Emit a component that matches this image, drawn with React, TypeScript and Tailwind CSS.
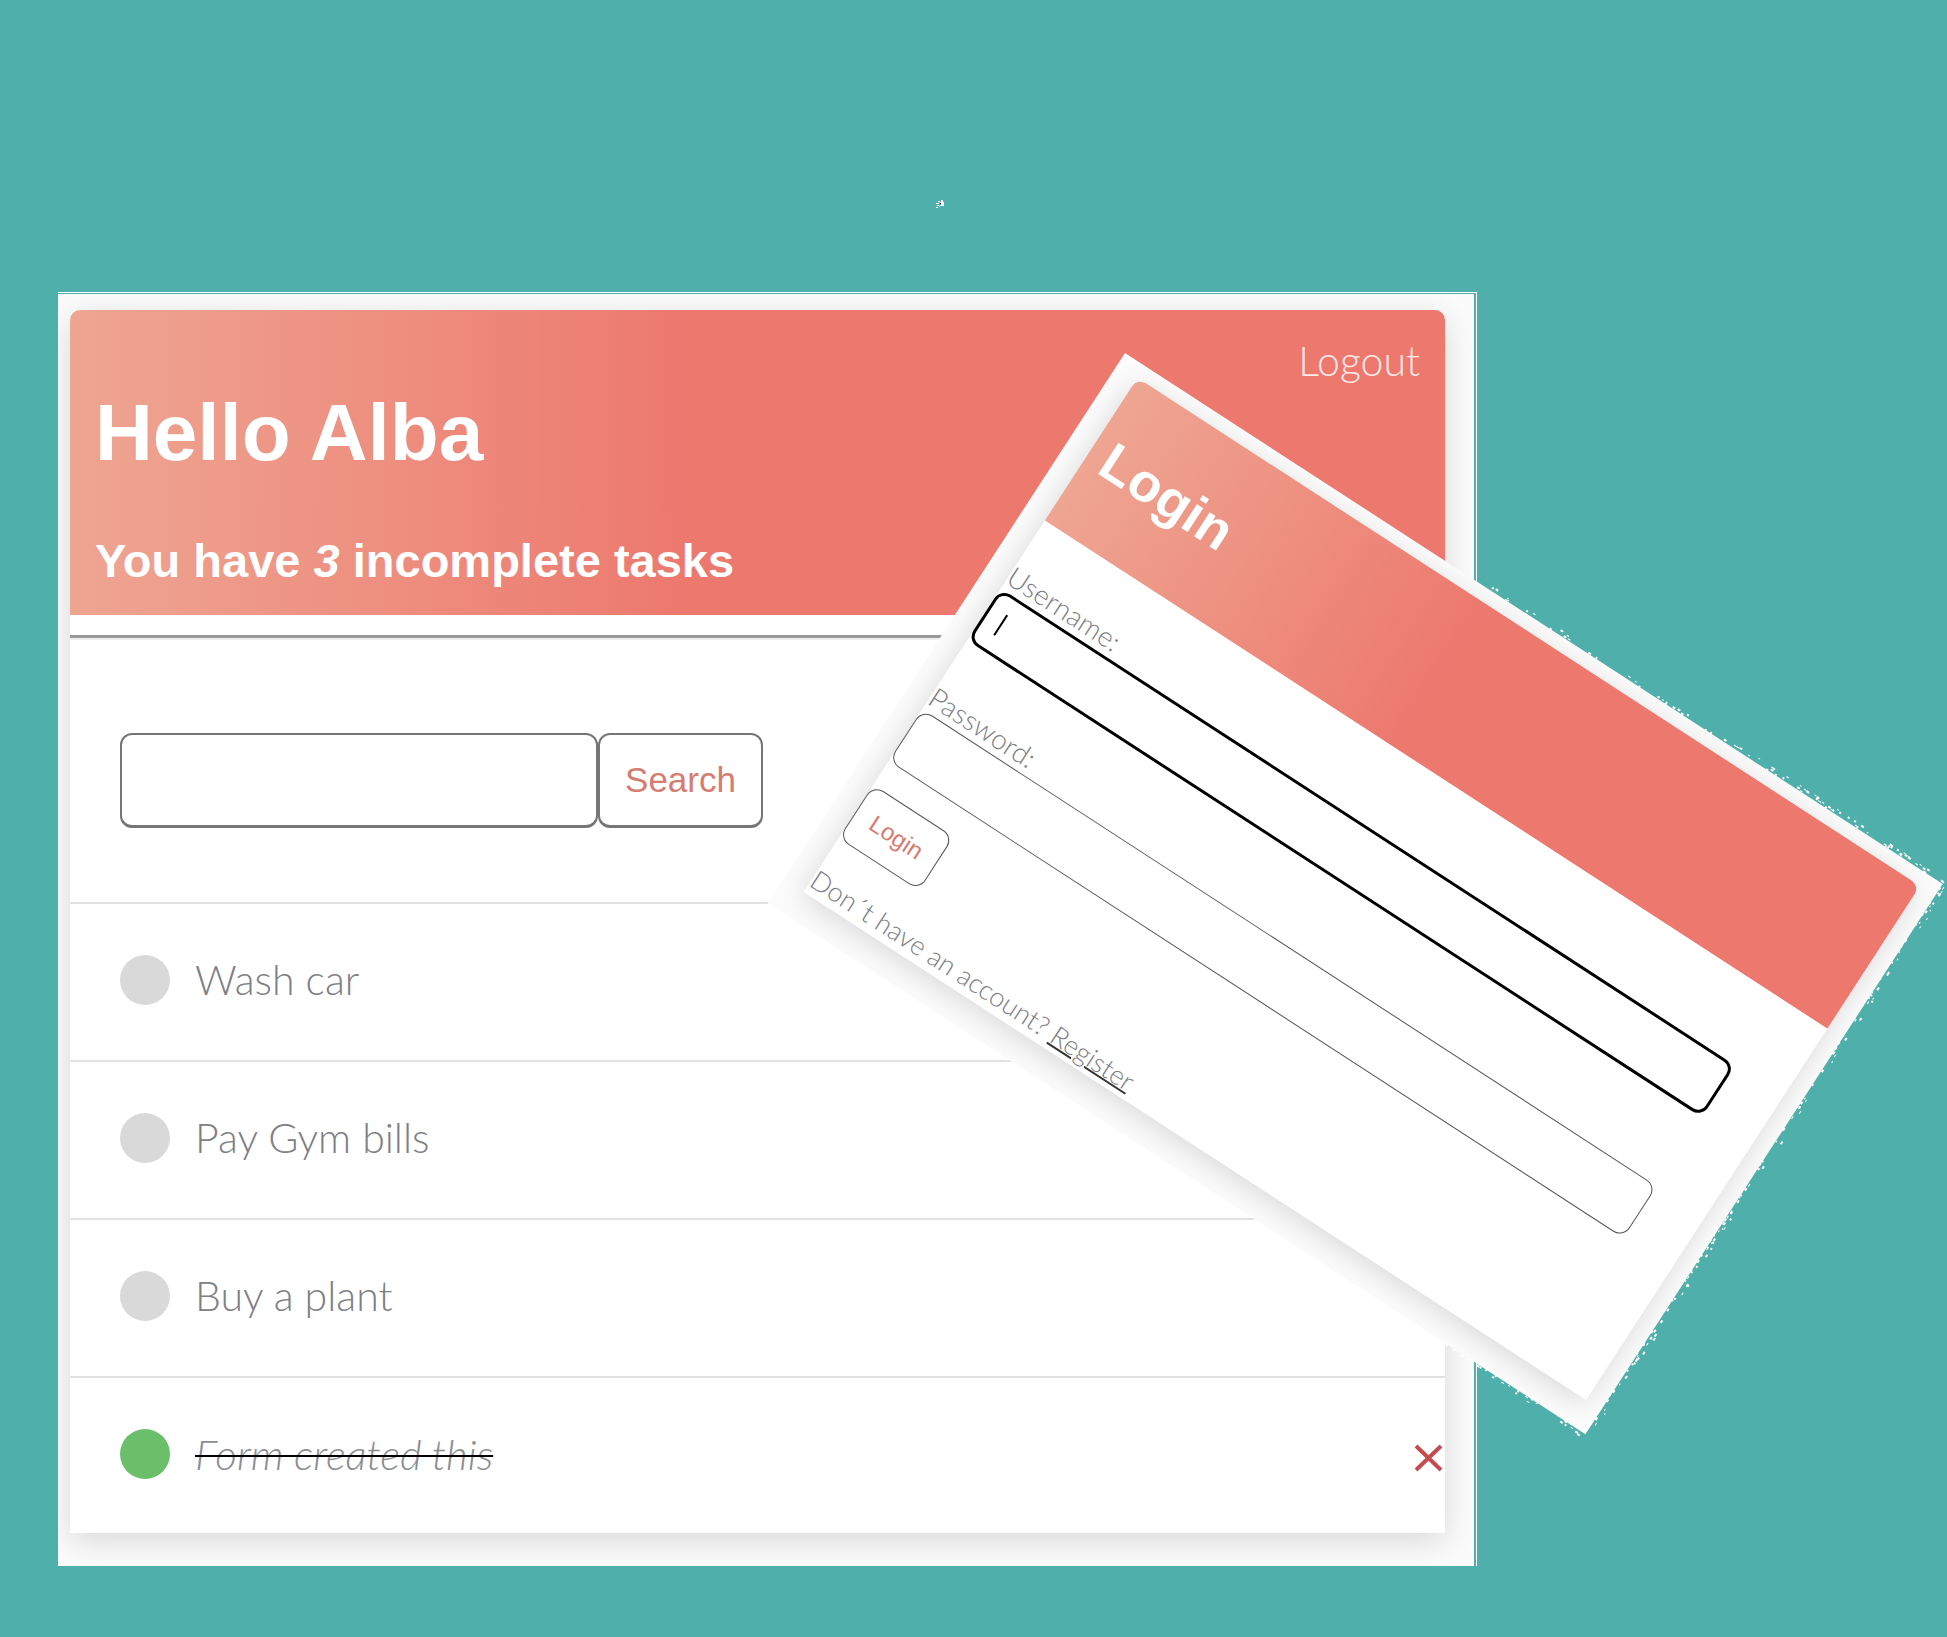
import { useId } from "react";

const tasks = [
  { title: "Wash car", done: false },
  { title: "Pay Gym bills", done: false },
  { title: "Buy a plant", done: false },
  { title: "Form created this", done: true },
];

const headerGradient = "bg-linear-to-r from-[#eea592] from-0% to-[#ec786e] to-45%";

/* Small white flecks scattered just outside the login window's edges. */
function Flecks() {
  let seed = 7;
  const rand = () => {
    seed = (seed * 16807) % 2147483647;
    return seed / 2147483647;
  };
  const flecks: { x: number; y: number; w: number; h: number }[] = [];
  const size = () => 1 + Math.floor(rand() * 2);
  for (let i = 0; i < 90; i++) {
    flecks.push({ x: 410 + rand() * 565, y: -rand() * 5 - 1, w: size() + 1, h: size() });
  }
  for (let i = 0; i < 130; i++) {
    flecks.push({ x: 974 + rand() * rand() * 7, y: rand() * 656, w: size(), h: size() + 1 });
  }
  for (let i = 0; i < 35; i++) {
    flecks.push({ x: 800 + rand() * 175, y: 655 + rand() * rand() * 6, w: size() + 1, h: size() });
  }
  return (
    <svg
      aria-hidden="true"
      viewBox="0 0 975 656"
      className="pointer-events-none absolute inset-0 size-full overflow-visible"
      fill="#fff"
    >
      {flecks.map((f, i) => (
        <rect key={i} x={f.x} y={f.y} width={f.w} height={f.h} />
      ))}
    </svg>
  );
}

function TaskWindow() {
  return (
    <section className="relative">
      <span
        aria-hidden="true"
        className="pointer-events-none absolute -top-[2px] -right-[3px] bottom-0 left-0 border-t border-r border-white"
      />
      <div className="overflow-hidden bg-[#fbfbfb] pt-4 pr-[29px] pb-[33px] pl-3">
        <div className="rounded-t-[10px] bg-white shadow-[0_8px_32px_rgba(0,0,0,0.14)]">
          <header className={`flex flex-col rounded-t-[10px] px-[25px] pt-[26px] pb-[26px] text-white ${headerGradient}`}>
            <a href="#logout" className="self-end font-[Lato] text-[41px] leading-[50px] font-light text-white/85">
              Logout
            </a>
            <h1 className="text-[80px] leading-[94px] font-bold">Hello Alba</h1>
            <h2 className="mt-[53px] text-[47px] leading-[56px] font-bold">
              You have <em>3</em> incomplete tasks
            </h2>
          </header>

          <hr className="mt-5 h-[5px] border-t-3 border-b-2 border-t-[#999] border-b-[#eee]" />

          <form className="flex px-[50px] pt-[93px] pb-[74px]" onSubmit={(e) => e.preventDefault()}>
            <input
              type="text"
              aria-label="Search tasks"
              className="h-[95px] w-[478px] rounded-xl border-2 border-b-3 border-[#767676] px-5 text-4xl outline-none"
            />
            <button
              type="submit"
              className="h-[95px] w-[165px] rounded-xl border-2 border-b-3 border-[#767676] bg-white text-[35px] text-[#d67c70]"
            >
              Search
            </button>
          </form>

          <ul>
            {tasks.map((task) => (
              <TaskRow key={task.title} title={task.title} done={task.done} />
            ))}
          </ul>
        </div>
      </div>
    </section>
  );
}

function TaskRow({ title, done }: { title: string; done: boolean }) {
  const id = useId();
  return (
    <li className="flex h-[158px] items-center border-t-2 border-[#e1e1e3] pb-1 pl-[50px] last:h-[157px]">
      <input
        id={id}
        type="checkbox"
        defaultChecked={done}
        className="size-[50px] appearance-none rounded-full bg-[#d9d9d9] checked:bg-[#6bbf6b]"
      />
      <label
        htmlFor={id}
        className={
          done
            ? "ml-[25px] font-[Lato] text-[42px] leading-[50px] font-light text-[#8a8d92] italic line-through decoration-black decoration-2"
            : "ml-[25px] font-[Lato] text-[41px] leading-[50px] font-light text-[#7d8085]"
        }
      >
        {title}
      </label>
      {done && (
        <button type="button" aria-label={`Delete ${title}`} className="mt-2 ml-auto text-[#c64b50]">
          <svg viewBox="0 0 32 32" className="size-8" stroke="currentColor" strokeWidth="4" fill="none">
            <path d="M3 4 28 28M28 4 3 28" />
          </svg>
        </button>
      )}
    </li>
  );
}

function LoginWindow() {
  const userId = useId();
  const passId = useId();
  return (
    <section className="absolute top-[353px] left-[1125px] w-[975px] origin-top-left rotate-33">
      <Flecks />
      <div className="overflow-hidden bg-[#fcfcfc] pt-[14px] pr-[18px] pb-[29px] pl-6">
        <div className="rounded-t-[10px] bg-white shadow-[0_6px_30px_rgba(0,0,0,0.14)]">
          <header className={`rounded-t-[10px] px-4 pt-[52px] pb-[56px] text-white ${headerGradient}`}>
            <h1 className="text-[54px] leading-[62px] font-bold">Login</h1>
          </header>
          <form className="flex flex-col items-start pt-[45px]" onSubmit={(e) => e.preventDefault()}>
            <label htmlFor={userId} className="font-[Lato] text-[28px] leading-9 font-light text-[#7d8085]">
              Username:
            </label>
            <div className="flex h-[62px] w-[876px] items-center rounded-xl border-3 border-black px-4">
              <span className="h-6 w-[2px] bg-black" aria-hidden="true" />
              <input id={userId} type="text" className="h-full flex-1 text-2xl outline-none" />
            </div>
            <label htmlFor={passId} className="mt-[46px] font-[Lato] text-[28px] leading-9 font-light text-[#7d8085]">
              Password:
            </label>
            <input
              id={passId}
              type="password"
              className="h-[62px] w-[876px] rounded-xl border border-[#555] px-4 text-2xl outline-none"
            />
            <button
              type="submit"
              className="mt-7 h-16 w-24 rounded-xl border border-[#555] bg-white text-2xl text-[#d67c70]"
            >
              Login
            </button>
          </form>
          <p className="mt-7 font-[Lato] text-[27px] leading-9 font-light text-[#7d8085]">
            Don´t have an account?{" "}
            <a href="#register" className="underline decoration-[#333] decoration-2">
              Register
            </a>
          </p>
        </div>
      </div>
    </section>
  );
}

export default function App() {
  return (
    <main className="relative min-h-screen overflow-hidden bg-[#4fafaa] pt-[294px] pr-[473px] pb-[70px] pl-[58px] font-['Liberation_Sans',sans-serif]">
      <svg aria-hidden="true" viewBox="0 0 8 8" className="absolute top-[200px] left-[936px] size-2">
        <path d="M2 1h2v1H2zM5 0h2v2h1v4H4V5h1V3H4V2h1zM0 3h3v1H0zM1 5h2v1H1zM0 7h2v1H0zM3 6h1v1H3z" fill="#fff" />
        <path d="M4 3h1v1H4z" fill="#111" />
      </svg>
      <TaskWindow />
      <LoginWindow />
    </main>
  );
}
